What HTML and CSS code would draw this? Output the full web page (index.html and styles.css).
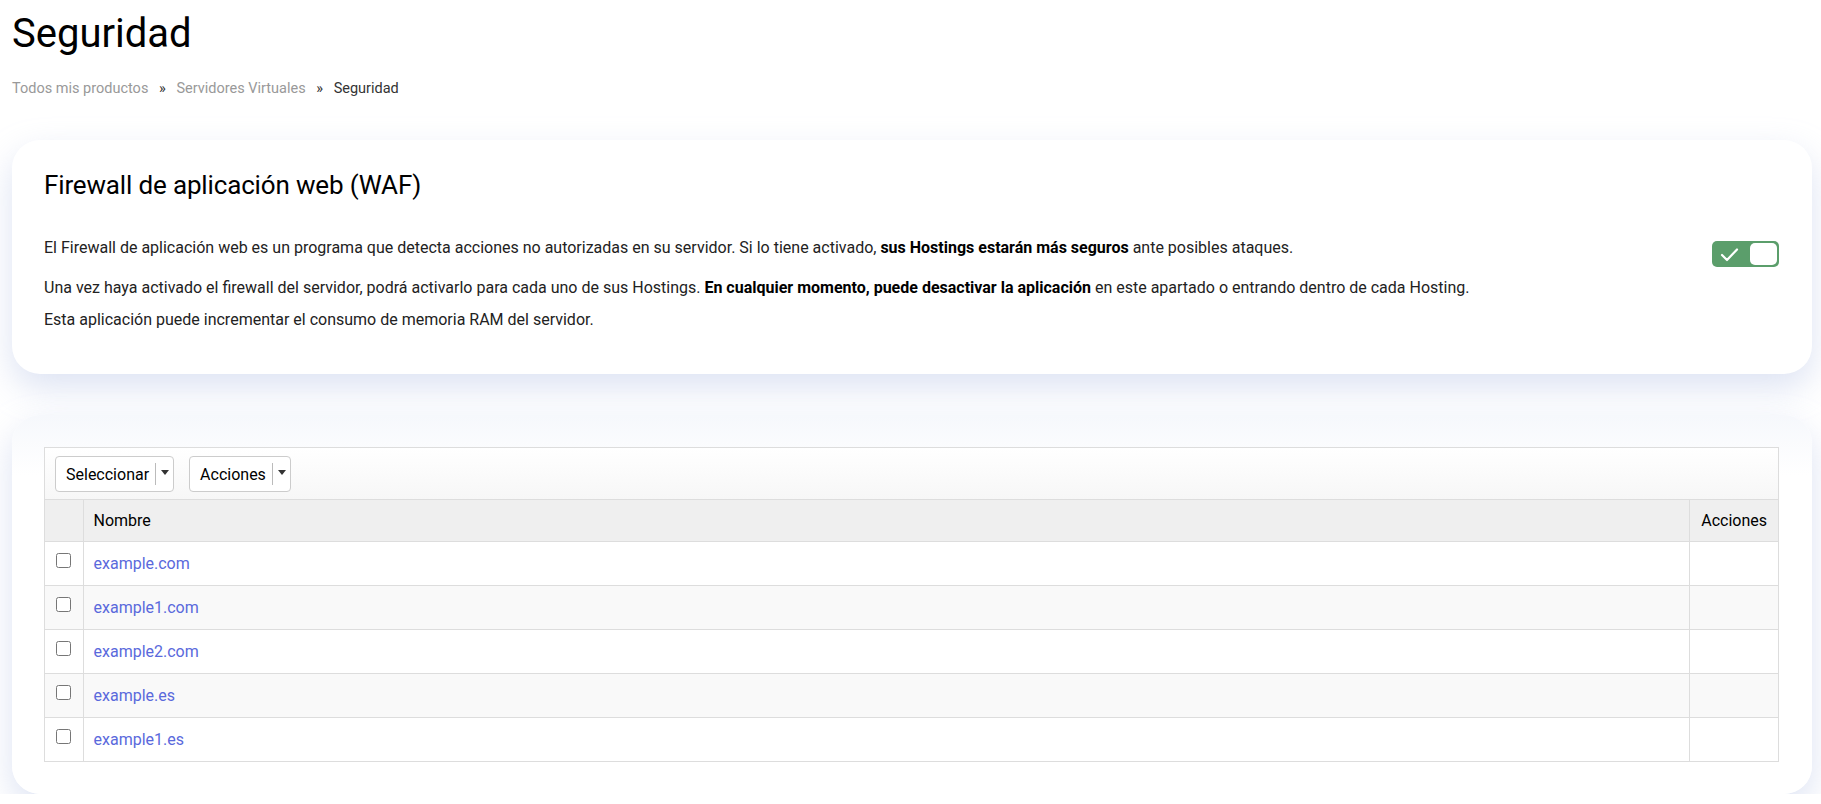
FILE: index.html
```html
<!DOCTYPE html>
<html lang="es">
<head>
    <meta charset="UTF-8">
    <meta name="viewport" content="width=device-width, initial-scale=1.0">
    <title>Seguridad</title>
    <link rel="stylesheet" href="styles.css">
</head>
<body>
    <h1 class="page-title">Seguridad</h1>

    <div class="breadcrumb">
        <a href="#">Todos mis productos</a>
        <span class="sep">»</span>
        <a href="#">Servidores Virtuales</a>
        <span class="sep">»</span>
        <span class="current">Seguridad</span>
    </div>

    <div class="card waf-card">
        <h2 class="card-title">Firewall de aplicación web (WAF)</h2>

        <div class="waf-row">
            <p>El Firewall de aplicación web es un programa que detecta acciones no autorizadas en su servidor. Si lo tiene activado, <b>sus Hostings estarán más seguros</b> ante posibles ataques.</p>
            <div class="toggle on">
                <svg class="toggle-check" width="19" height="15" viewBox="0 0 19 15">
                    <path d="M2 8 L7 13 L17 2.5" fill="none" stroke="#fff" stroke-width="2.2" stroke-linecap="round" stroke-linejoin="round"/>
                </svg>
                <span class="toggle-knob"></span>
            </div>
        </div>
        <p>Una vez haya activado el firewall del servidor, podrá activarlo para cada uno de sus Hostings. <b>En cualquier momento, puede desactivar la aplicación</b> en este apartado o entrando dentro de cada Hosting.</p>
        <p class="last">Esta aplicación puede incrementar el consumo de memoria RAM del servidor.</p>
    </div>

    <div class="card list-card">
        <div class="grid">
            <div class="grid-toolbar">
                <button class="split-btn">Seleccionar<span class="divider"></span><span class="caret"></span></button>
                <button class="split-btn">Acciones<span class="divider"></span><span class="caret"></span></button>
            </div>
            <table class="grid-table">
                <thead>
                    <tr>
                        <th class="col-check"></th>
                        <th>Nombre</th>
                        <th class="col-actions">Acciones</th>
                    </tr>
                </thead>
                <tbody>
                    <tr>
                        <td class="col-check"><input type="checkbox"></td>
                        <td><a href="#">example.com</a></td>
                        <td class="col-actions"></td>
                    </tr>
                    <tr>
                        <td class="col-check"><input type="checkbox"></td>
                        <td><a href="#">example1.com</a></td>
                        <td class="col-actions"></td>
                    </tr>
                    <tr>
                        <td class="col-check"><input type="checkbox"></td>
                        <td><a href="#">example2.com</a></td>
                        <td class="col-actions"></td>
                    </tr>
                    <tr>
                        <td class="col-check"><input type="checkbox"></td>
                        <td><a href="#">example.es</a></td>
                        <td class="col-actions"></td>
                    </tr>
                    <tr>
                        <td class="col-check"><input type="checkbox"></td>
                        <td><a href="#">example1.es</a></td>
                        <td class="col-actions"></td>
                    </tr>
                </tbody>
            </table>
        </div>
    </div>
</body>
</html>
```

FILE: styles.css
```css
* {
    box-sizing: border-box;
    margin: 0;
    padding: 0;
}

body {
    font-family: Roboto, "Liberation Sans", sans-serif;
    background-color: #fff;
    color: #000;
    padding: 0 9px 0 12px;
    overflow: hidden;
}

.page-title {
    font-size: 40px;
    font-weight: 400;
    line-height: 50px;
    padding-top: 9px;
}

.breadcrumb {
    font-size: 14.5px;
    margin-top: 20px;
    line-height: 20px;
    color: #333;
}

.breadcrumb a {
    color: #999;
    text-decoration: none;
}

.breadcrumb .sep {
    margin: 0 7px;
    color: #333;
}

.card {
    background-color: #fff;
    border-radius: 28px;
    box-shadow: 0 14px 34px rgba(170, 185, 225, 0.4);
}

.waf-card {
    margin-top: 41px;
    padding: 29px 33px 43px 32px;
}

.card-title {
    font-size: 26px;
    font-weight: 400;
    line-height: 32px;
    margin-bottom: 36px;
    letter-spacing: -0.15px;
}

.waf-card p {
    font-size: 16px;
    line-height: 22px;
    color: #222;
    margin-bottom: 10px;
}

.waf-card p b {
    color: #000;
}

.waf-card p.last {
    margin-bottom: 0;
}

.waf-row {
    display: flex;
    justify-content: space-between;
    align-items: flex-start;
    margin-bottom: 10px;
}

.waf-row p {
    margin-bottom: 0;
}

.toggle {
    flex-shrink: 0;
    width: 67px;
    height: 26px;
    margin-top: 4px;
    border-radius: 5px;
    background-color: #5b9e6b;
    display: flex;
    align-items: center;
    justify-content: space-between;
    padding: 0 2px 0 8px;
}

.toggle-knob {
    width: 27px;
    height: 22px;
    background-color: #fff;
    border-radius: 5px;
}

.list-card {
    margin-top: 41px;
    padding: 32px 33px 32px 32px;
    background: linear-gradient(#f6f8fc, #fff 60px);
}

.grid {
    border: 1px solid #ddd;
}

.grid-toolbar {
    display: flex;
    gap: 15px;
    padding: 8px 10px;
    height: 52px;
    background: linear-gradient(#fff, #f7f7f7);
    border-bottom: 1px solid #ddd;
}

.split-btn {
    display: flex;
    align-items: center;
    height: 36px;
    padding: 0 4px 0 10px;
    background-color: #fff;
    border: 1px solid #ccc;
    border-radius: 4px;
    font-family: Roboto, "Liberation Sans", sans-serif;
    font-size: 16px;
    color: #000;
}

.split-btn .divider {
    width: 1px;
    height: 22px;
    background-color: #bbb;
    margin: 0 5px 0 6px;
}

.split-btn .caret {
    width: 0;
    height: 0;
    border-top: 5px solid #333;
    border-left: 4px solid transparent;
    border-right: 4px solid transparent;
    margin-bottom: 4px;
}

.grid-table {
    width: 100%;
    border-collapse: collapse;
    font-size: 16px;
}

.grid-table th {
    background-color: #efefef;
    font-weight: 400;
    text-align: left;
    height: 41px;
    padding: 0 10px;
    border-left: 1px solid #ddd;
}

.grid-table th:first-child,
.grid-table td:first-child {
    border-left: none;
}

.grid-table td {
    height: 44px;
    padding: 0 10px;
    border-top: 1px solid #ddd;
    border-left: 1px solid #ddd;
}

.grid-table tbody tr:nth-child(even) td {
    background-color: #f9f9f9;
}

.grid-table .col-check {
    width: 38px;
    padding: 0;
    text-align: center;
}

.grid-table td.col-check {
    vertical-align: top;
    padding-top: 11px;
}

.grid-table .col-actions {
    width: 88px;
    padding: 0 11px;
}

.grid-table input[type="checkbox"] {
    width: 15px;
    height: 15px;
    margin: 0;
}

.grid-table a {
    color: #5a69dc;
    text-decoration: none;
}
```
